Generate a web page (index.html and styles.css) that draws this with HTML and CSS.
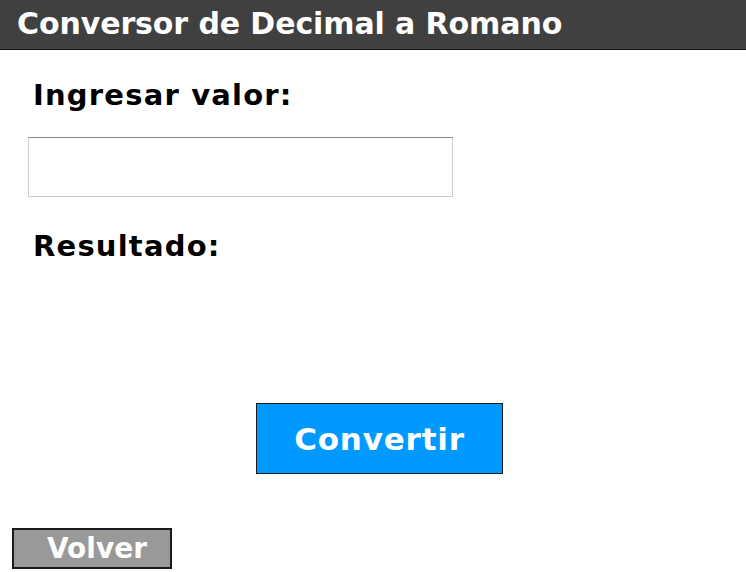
FILE: index.html
```html
<!DOCTYPE html>
<html lang="es">
<head>
<meta charset="utf-8">
<title>Conversor de Decimal a Romano</title>
<link rel="stylesheet" href="styles.css">
</head>
<body>
<header class="topbar"><h1 class="title">Conversor de Decimal a Romano</h1></header>
<main class="content">
  <label class="label label-input" for="valor">Ingresar valor:</label>
  <input class="field" id="valor" type="text">
  <div class="label label-result">Resultado:</div>
  <div class="result"></div>
  <div class="actions"><button class="btn-convert" type="button">Convertir</button></div>
  <div class="footer"><button class="btn-back" type="button">Volver</button></div>
</main>
</body>
</html>
```
FILE: styles.css
```css
html, body { margin: 0; padding: 0; background: #fff; }
body { width: 746px; height: 572px; overflow: hidden; font-family: "DejaVu Sans", Verdana, sans-serif; }
.topbar { height: 49px; background: #404040; border-bottom: 1px solid #111; display: flex; align-items: center; padding-left: 17px; }
.title { margin: 0 0 2px 0; font-family: "DejaVu Sans", sans-serif; font-weight: bold; font-size: 30px; letter-spacing: -0.1px; color: #fff; line-height: 1; }
.content { display: flex; flex-direction: column; }
.label { font-weight: bold; font-size: 29px; letter-spacing: 1.2px; color: #000; margin-left: 33px; line-height: 30px; }
.label-input { margin-top: 30px; }
.field { margin: 27px 0 0 28px; width: 425px; height: 60px; box-sizing: border-box; border: 1px solid #ccc; border-top-color: #888; background: #fff; font-size: 20px; }
.label-result { margin-top: 34px; }
.result { height: 142px; }
.actions { display: flex; padding-left: 256px; }
.btn-convert { width: 247px; height: 71px; background: #0099ff; border: 1px solid #1a1a1a; color: #fff; font-family: "DejaVu Sans", sans-serif; font-weight: bold; font-size: 31px; letter-spacing: 0.8px; padding: 0; }
.footer { display: flex; padding-left: 12px; margin-top: 54px; }
.btn-back { width: 160px; height: 41px; background: #999; border: 2px solid #1a1a1a; color: #fff; font-family: "DejaVu Sans", sans-serif; font-weight: bold; font-size: 28px; padding: 0 0 0 10px; line-height: 1; }
```
